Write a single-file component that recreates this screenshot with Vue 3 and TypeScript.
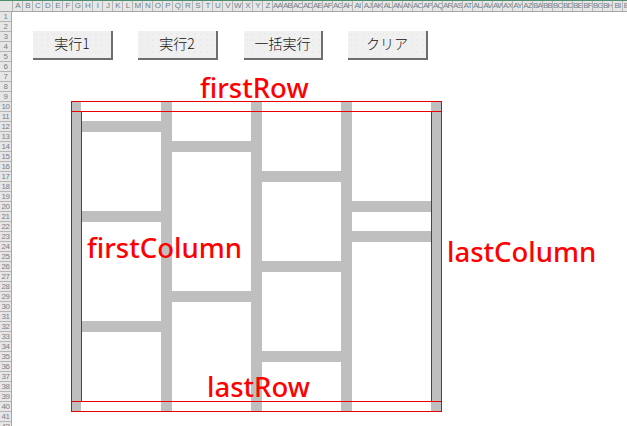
<script setup lang="ts">
const columnName = (i: number): string => {
  const letters = 'ABCDEFGHIJKLMNOPQRSTUVWXYZ';
  if (i < 26) return letters[i];
  return letters[Math.floor(i / 26) - 1] + letters[i % 26];
};

const columns = Array.from({ length: 62 }, (_, i) => columnName(i));
const rows = Array.from({ length: 42 }, (_, i) => i + 1);
const buttons = ['実行1', '実行2', '一括実行', 'クリア'];

// diagram coordinates, origin is the top left of the outer frame
const pillars = [
  { x: 0, w: 10 },
  { x: 90, w: 11 },
  { x: 180, w: 11 },
  { x: 270, w: 11 },
  { x: 360, w: 10 },
];
const bars = [
  { x: 10, ys: [20, 110, 220] },
  { x: 100, ys: [40, 190] },
  { x: 190, ys: [70, 160, 250] },
  { x: 280, ys: [100, 130] },
];
const labels = [
  { text: 'firstRow', cls: 'first-row' },
  { text: 'firstColumn', cls: 'first-column' },
  { text: 'lastColumn', cls: 'last-column' },
  { text: 'lastRow', cls: 'last-row' },
];
</script>

<template>
  <div class="excel">
    <div class="col-header">
      <div class="corner"></div>
      <div v-for="col in columns" :key="col" class="col-cell">{{ col }}</div>
    </div>
    <div class="body">
      <div class="row-header">
        <div v-for="row in rows" :key="row" class="row-cell">{{ row }}</div>
      </div>
      <div class="sheet">
        <div class="toolbar">
          <button v-for="label in buttons" :key="label" class="macro-btn">{{ label }}</button>
        </div>
        <div class="diagram">
          <svg width="372" height="312" viewBox="0 0 372 312">
            <rect v-for="p in pillars" :key="p.x" :x="p.x" y="0" :width="p.w" height="310" fill="#bfbfbf" />
            <template v-for="bar in bars" :key="bar.x">
              <rect v-for="y in bar.ys" :key="y" :x="bar.x" :y="y" width="80" height="11" fill="#bfbfbf" />
            </template>
            <rect x="0.5" y="0.5" width="370" height="310" fill="none" stroke="#e60000" />
            <path d="M0 10.5H370M0 300.5H370M10.5 10V300M360.5 10V300" fill="none" stroke="#e60000" />
          </svg>
          <span v-for="item in labels" :key="item.text" class="label" :class="item.cls">{{ item.text }}</span>
        </div>
      </div>
    </div>
  </div>
</template>

<style scoped>
.excel {
  width: 627px;
  height: 426px;
  overflow: hidden;
  display: flex;
  flex-direction: column;
  background: #ffffff;
  font-family: "Liberation Sans", sans-serif;
}

.col-header {
  display: flex;
  flex: none;
  height: 12px;
  box-sizing: border-box;
  border-top: 1px solid #4f8f6f;
  border-bottom: 1px solid #a6a6a6;
  background: #e6e6e6;
}

.corner {
  flex: none;
  width: 13px;
  box-sizing: border-box;
  border-right: 1px solid #b5b5b5;
}

.col-cell {
  flex: none;
  width: 10px;
  box-sizing: border-box;
  border-right: 1px solid #b5b5b5;
  font-size: 8px;
  line-height: 10px;
  text-align: center;
  color: #6f7f8f;
  white-space: nowrap;
  overflow: hidden;
  letter-spacing: -0.8px;
}

.body {
  display: flex;
  flex: 1;
  min-height: 0;
}

.row-header {
  flex: none;
  width: 12px;
  box-sizing: border-box;
  border-right: 1px solid #a6a6a6;
  background: #e6e6e6;
}

.row-cell {
  height: 10px;
  box-sizing: border-box;
  border-bottom: 1px solid #b5b5b5;
  font-size: 8px;
  line-height: 9px;
  text-align: center;
  color: #7a7f8a;
  letter-spacing: -0.5px;
}

.sheet {
  flex: 1;
  padding: 19px 0 0 21px;
}

.toolbar {
  display: flex;
  gap: 25px;
  height: 29px;
}

.macro-btn {
  width: 80px;
  height: 29px;
  padding: 0 0 3px;
  box-sizing: border-box;
  border: none;
  border-right: 2px solid #6e6e6e;
  border-bottom: 2px solid #6e6e6e;
  background-color: #f0f0f0;
  background-image: radial-gradient(circle, #e6e6e6 0.5px, transparent 1px);
  background-size: 6px 6px;
  font-family: "Noto Sans CJK JP", sans-serif;
  font-size: 14px;
  font-weight: 300;
  color: #111111;
}

.macro-btn:nth-child(3) {
  width: 79px;
  margin-left: 1px;
}

.diagram {
  position: relative;
  width: 372px;
  margin: 41px 0 0 38px;
}

.diagram svg {
  display: block;
}

.label {
  position: absolute;
  font-family: "Noto Sans", sans-serif;
  font-size: 27.5px;
  font-weight: 500;
  line-height: 30px;
  color: #ff0000;
  white-space: nowrap;
}

.first-row {
  left: 129px;
  top: -28px;
}

.first-column {
  left: 16px;
  top: 132px;
}

.last-column {
  left: 376px;
  top: 136px;
}

.last-row {
  left: 136px;
  top: 271px;
}
</style>
